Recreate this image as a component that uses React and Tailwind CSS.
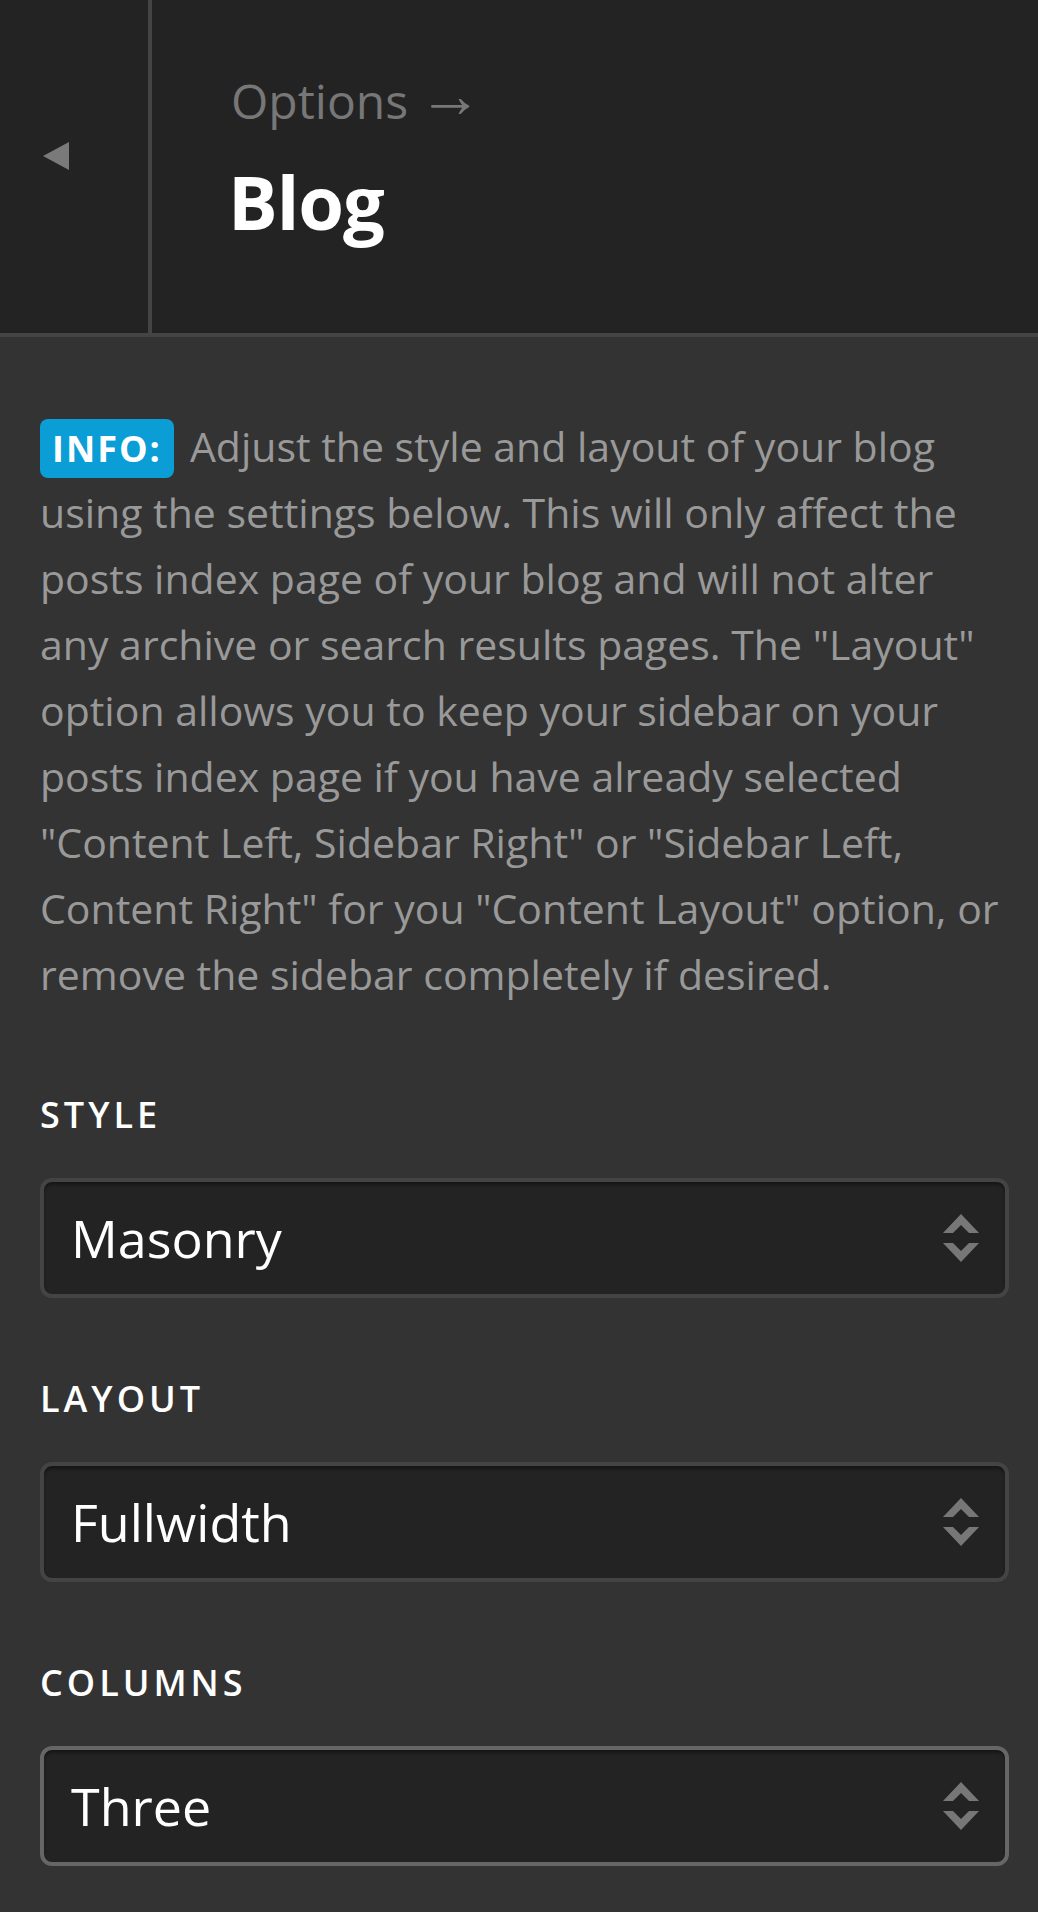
const fields = [
  { label: "Style", value: "Masonry", focused: false },
  { label: "Layout", value: "Fullwidth", focused: false },
  { label: "Columns", value: "Three", focused: true },
];

const SelectArrows = () => (
  <svg width="36" height="48" viewBox="0 0 36 48" className="shrink-0">
    <polygon points="18,0 36,19 26,19 18,11 10,19 0,19" fill="#777" />
    <polygon points="0,29 10,29 18,37 26,29 36,29 18,48" fill="#777" />
  </svg>
);

const Field = ({ label, value, focused }) => (
  <div className="flex flex-col">
    <div className="text-[36px] leading-none font-semibold tracking-[4px] uppercase text-white">
      {label}
    </div>
    <div
      className={`mt-[45px] h-[120px] flex items-center justify-between pl-[27px] pr-[26px] rounded-[12px] border-[4px] bg-[#232323] shadow-[inset_0_3px_3px_rgba(0,0,0,0.35)] ${
        focused ? "border-[#666]" : "border-[#444]"
      }`}
    >
      <span className="text-[52px] leading-none text-white">{value}</span>
      <SelectArrows />
    </div>
  </div>
);

const App = () => {
  return (
    <div className="w-[1038px] min-h-[1912px] bg-[#333] font-['Open_Sans',sans-serif]">
      <header className="flex h-[337px] bg-[#232323] border-b-[4px] border-[#444]">
        <div className="w-[152px] shrink-0 border-r-[4px] border-[#444] pl-[43px] pt-[142px]">
          <svg width="26" height="28" viewBox="0 0 26 28">
            <polygon points="26,0 26,28 0,14" fill="#7a7a7a" />
          </svg>
        </div>
        <div className="flex flex-col pl-[79px] pt-[77px]">
          <div className="flex items-center h-[48px] text-[48px] leading-none text-[#777]">
            Options
            <span className="ml-[10px] mb-[16px] text-[64px] leading-none">→</span>
          </div>
          <h1 className="mt-[40px] -ml-[3px] text-[74px] leading-none font-bold tracking-[-1px] text-white">
            Blog
          </h1>
        </div>
      </header>

      <main className="pl-[40px] pr-[29px] pt-[76px] pb-[45px]">
        <p className="text-[41px] leading-[66px] text-[#999]">
          <span className="inline-block h-[59px] leading-[59px] px-[12px] mr-[16px] rounded-[8px] bg-[#0b9dd5] text-[36px] font-bold tracking-[2px] text-white">
            INFO:
          </span>
          Adjust the style and layout of your blog using the settings below.
          This will only affect the posts index page of your blog and will not
          alter any archive or search results pages. The "Layout" option allows
          you to keep your sidebar on your posts index page if you have already
          selected "Content Left, Sidebar Right" or "Sidebar Left, Content
          Right" for you "Content Layout" option, or remove the sidebar
          completely if desired.
        </p>

        <div className="mt-[90px] flex flex-col gap-[83px]">
          {fields.map((f) => (
            <Field key={f.label} {...f} />
          ))}
        </div>
      </main>
    </div>
  );
};

export default App;
